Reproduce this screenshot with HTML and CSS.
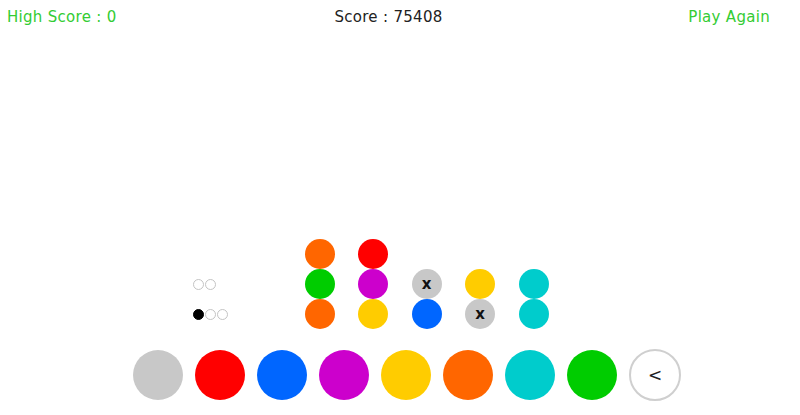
FILE: index.html
```html
<!DOCTYPE html>
<html lang="en">
<head>
	<meta charset="UTF-8">
	<title>Mastermind</title>
	<link rel="stylesheet" href="styles.css">
</head>
<body>

	<!-- TOP BAR -->
	<div class="topbar">
		<div class="high">High Score : 0</div>
		<div class="score">Score : 75408</div>
		<div class="again">Play Again</div>
	</div>

	<!-- BOARD -->
	<div class="board">
		<div class="row">
			<div class="pegs"></div>
			<div class="slot orange"></div>
			<div class="slot red"></div>
		</div>
		<div class="row">
			<div class="pegs"><span class="peg"></span><span class="peg"></span></div>
			<div class="slot green"></div>
			<div class="slot purple"></div>
			<div class="slot miss">x</div>
			<div class="slot yellow"></div>
			<div class="slot cyan"></div>
		</div>
		<div class="row">
			<div class="pegs"><span class="peg black"></span><span class="peg"></span><span class="peg"></span></div>
			<div class="slot orange"></div>
			<div class="slot yellow"></div>
			<div class="slot blue"></div>
			<div class="slot miss">x</div>
			<div class="slot cyan"></div>
		</div>
	</div>

	<!-- PALETTE -->
	<div class="palette">
		<div class="pick gray"></div>
		<div class="pick red"></div>
		<div class="pick blue"></div>
		<div class="pick purple"></div>
		<div class="pick yellow"></div>
		<div class="pick orange"></div>
		<div class="pick cyan"></div>
		<div class="pick green"></div>
		<div class="back">&lt;</div>
	</div>

</body>
</html>
```
FILE: styles.css
```css
* {
	margin: 0;
	padding: 0;
	box-sizing: border-box;
}

body {
	background: #fff;
	font-family: 'DejaVu Sans', sans-serif;
	color: #222;
}

/* TOP BAR */
.topbar {
	display: grid;
	grid-template-columns: 1fr auto 1fr;
	align-items: center;
	height: 34px;
	padding: 0 30px 0 7px;
	font-size: 15px;
	letter-spacing: 0.3px;
}

.high, .again {
	color: #3c3;
}

.again {
	text-align: right;
}

/* BOARD */
.board {
	margin: 205px 0 0 193px;
}

.row {
	display: grid;
	grid-template-columns: 88px repeat(5, 30px);
	column-gap: 23.5px;
	height: 30px;
	align-items: center;
}

.pegs {
	display: flex;
	gap: 1px;
}

.peg {
	width: 11px;
	height: 11px;
	border: 1.5px solid #c4c4c4;
	border-radius: 50%;
}

.peg.black {
	background: #000;
	border-color: #000;
}

.slot {
	width: 30px;
	height: 30px;
	border-radius: 50%;
	display: flex;
	align-items: center;
	justify-content: center;
	font-size: 15px;
	font-weight: bold;
	color: #111;
}

/* PALETTE */
.palette {
	display: flex;
	align-items: center;
	gap: 12px;
	margin: 20px 0 0 133px;
}

.pick {
	width: 50px;
	height: 50px;
	border-radius: 50%;
}

.back {
	width: 52px;
	height: 52px;
	border: 2px solid #cfcfcf;
	border-radius: 50%;
	display: flex;
	align-items: center;
	justify-content: center;
	font-size: 17px;
	color: #222;
}

/* COLOURS */
.gray, .miss { background: #c8c8c8; }
.red { background: #ff0000; }
.blue { background: #0066ff; }
.purple { background: #cc00cc; }
.yellow { background: #ffcc00; }
.orange { background: #ff6600; }
.cyan { background: #00cccc; }
.green { background: #00cc00; }
```
